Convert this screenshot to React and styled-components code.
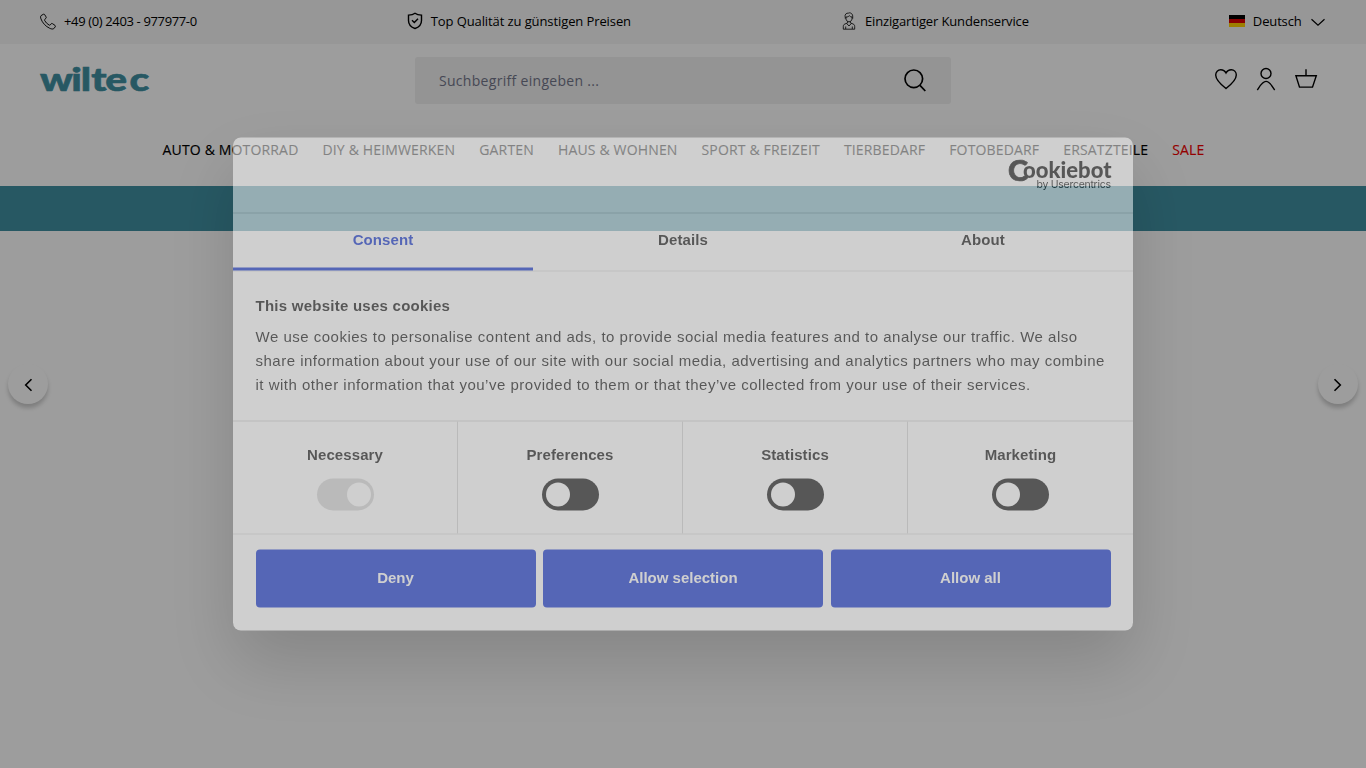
import styled, { createGlobalStyle } from 'styled-components'

const navItems = [
  'AUTO & MOTORRAD',
  'DIY & HEIMWERKEN',
  'GARTEN',
  'HAUS & WOHNEN',
  'SPORT & FREIZEIT',
  'TIERBEDARF',
  'FOTOBEDARF',
  'ERSATZTEILE',
]

const toggles = [
  { name: 'Necessary', locked: true },
  { name: 'Preferences' },
  { name: 'Statistics' },
  { name: 'Marketing' },
]

const PhoneIcon = () => (
  <Svg width='16' height='17' viewBox='0 0 17 17' strokeWidth='1'>
    <path d='M3.6.8 1.2 2.2C.4 2.9.5 4.400 1 5.700c1.600 4.300 5 8 9.300 10 1.500.7 3.200 1.100 4.200.5l1.700-2c.4-.5.3-1.100-.2-1.500l-2.700-1.900c-.5-.4-1.100-.3-1.500.2l-.9 1.100c-.3.4-.8.4-1.200.2C7.600 11.100 6 9.500 4.900 7.400c-.2-.4-.1-.9.200-1.200L6.300 5.100c.4-.4.5-1 .1-1.500L4.900 1.100C4.600.6 4.100.5 3.600.8z' />
  </Svg>
)

const ShieldIcon = () => (
  <Svg width='16' height='18' viewBox='0 0 16 18' strokeWidth='1.4'>
    <path d='M8 1.300C9.800 2.700 12 3.100 14.500 3.100V8.500c0 3.900-2.500 6.700-6.500 8-4-1.300-6.500-4.100-6.500-8V3.100C4 3.100 6.200 2.700 8 1.300z' />
    <path d='M5 8.300 7.300 10.500 11 6.700' />
  </Svg>
)

const AgentIcon = () => (
  <Svg width='16' height='18' viewBox='0 0 16 18' strokeWidth='.8'>
    <path d='M4.200 5.300C3.400 2.500 5.300.9 7.500 1.100c1.200-.8 4.700.1 4.200 4.200M4.300 5.200v1.500M11.700 5.200v1.500M5 5c1.700.1 2.700-.6 3.300-1.300C9 4.500 10 5 11 5v1.600c0 1.800-1.400 3.200-3 3.200S5 8.400 5 6.600zM6.600 9.400v1.500L3.900 12C2.700 12.500 2.300 13.300 2.300 14.400v2.800h11.400v-2.800c0-1.100-.4-1.900-1.600-2.400l-2.700-1.100V9.400M5.600 11.400 8 14l2.400-2.600M4.700 14.500v2.500M11.300 14.500v2.500' />
  </Svg>
)

const ChevronDown = () => (
  <Svg width='16' height='9' viewBox='0 0 16 9' strokeWidth='1.2'>
    <path d='M1.500 2.300 8 8.100 14.500 2.300' />
  </Svg>
)

const SearchIcon = () => (
  <Svg width='24' height='24' viewBox='0 0 24 24' strokeWidth='1.7'>
    <circle cx='10.800' cy='9.800' r='8.800' />
    <path d='M17 16.300 22.300 22' />
  </Svg>
)

const HeartIcon = () => (
  <Svg width='24' height='24' viewBox='0 0 24 24' strokeWidth='1.400'>
    <path d='M12 21.500C7.500 18 1.700 13.500 1.700 8c0-3.200 2.300-5.300 5-5.300 2.300 0 4.300 1.300 5.300 3.300 1-2 3-3.300 5.300-3.300 2.700 0 5 2.100 5 5.300 0 5.500-5.800 10-10.300 13.500z' />
  </Svg>
)

const UserIcon = () => (
  <Svg width='24' height='24' viewBox='0 0 24 24' strokeWidth='1.400'>
    <circle cx='12' cy='6.500' r='5' />
    <path d='M3.300 23C5.800 19.300 8.300 14.400 12 14.400S18.200 19.300 20.700 23' />
  </Svg>
)

const BasketIcon = () => (
  <Svg width='24' height='24' viewBox='0 0 24 24' strokeWidth='1.400'>
    <path d='M1.900 8.700H22.300L18.500 20.100H5.500zM12 2.200V8.700' />
  </Svg>
)

const Arrow = ({ flip }) => (
  <Svg width='10' height='14' viewBox='0 0 10 14' strokeWidth='1.6'>
    <path d={flip ? 'M1.500 1.200 7.300 7 1.500 12.800' : 'M8.500 1.200 2.700 7 8.500 12.800'} />
  </Svg>
)

const App = () => {
  return (
    <>
      <GlobalStyle />
      <Page>
        <TopBar>
          <TopItem $tracking='-0.36px'>
            <PhoneIcon />
            +49 (0) 2403 - 977977-0
          </TopItem>
          <TopItem $tracking='-0.1px'>
            <ShieldIcon />
            Top Qualität zu günstigen Preisen
          </TopItem>
          <TopItem $tracking='-0.14px'>
            <AgentIcon />
            Einzigartiger Kundenservice
          </TopItem>
          <Language $tracking='-0.14px'>
            <Flag />
            Deutsch
            <ChevronDown />
          </Language>
        </TopBar>
        <Header>
          <Logo viewBox='0 0 116 40'>
            <text x='0 24.6 32.1 40.4 51.4 70.4' y='30' transform='scale(1.27 1)'>
              wiltec
            </text>
          </Logo>
          <Search>
            Suchbegriff eingeben ...
            <SearchIcon />
          </Search>
          <Actions>
            <HeartIcon />
            <UserIcon />
            <BasketIcon />
          </Actions>
        </Header>
        <Nav>
          {navItems.map((item) => (
            <NavItem key={item}>{item}</NavItem>
          ))}
          <NavItem $sale>SALE</NavItem>
        </Nav>
        <Banner />
        <Slider>
          <SlideButton>
            <Arrow />
          </SlideButton>
          <SlideButton>
            <Arrow flip />
          </SlideButton>
        </Slider>
      </Page>
      <Underlay />
      <Dialog>
        <DialogHeader>
          <CookieLogo viewBox='0 0 110 50'>
            <BigC x='2' y='31.700' textLength='20' lengthAdjust='spacingAndGlyphs'>
              C
            </BigC>
            <text x='17' y='28' fontSize='23.500' textLength='88.500' lengthAdjust='spacingAndGlyphs'>
              ookiebot
            </text>
            <Byline x='30.500' y='38.500' textLength='74.500'>
              by Usercentrics
            </Byline>
          </CookieLogo>
        </DialogHeader>
        <Tabs>
          <Tab $active>Consent</Tab>
          <Tab>Details</Tab>
          <Tab>About</Tab>
        </Tabs>
        <Body>
          <BodyTitle>This website uses cookies</BodyTitle>
          <BodyText>
            We use cookies to personalise content and ads, to provide social media features and to
            analyse our traffic. We also share information about your use of our site with our
            social media, advertising and analytics partners who may combine it with other
            information that you’ve provided to them or that they’ve collected from your use of
            their services.
          </BodyText>
        </Body>
        <Toggles>
          {toggles.map(({ name, locked }) => (
            <ToggleCell key={name}>
              {name}
              <Switch $locked={locked}>
                <Knob />
              </Switch>
            </ToggleCell>
          ))}
        </Toggles>
        <Buttons>
          <Button>Deny</Button>
          <Button>Allow selection</Button>
          <Button>Allow all</Button>
        </Buttons>
      </Dialog>
    </>
  )
}

const GlobalStyle = createGlobalStyle`
  * {
    box-sizing: border-box;
  }
  body {
    margin: 0;
    overflow: hidden;
    background-color: #fff;
  }
`

const Svg = styled.svg`
  display: block;
  flex: none;
  fill: none;
  stroke: #000;
`

const Page = styled.div`
  height: 100vh;
  display: flex;
  flex-direction: column;
  background-color: #fff;
  color: #000;
  font-family: 'Open Sans', sans-serif;
`

const TopBar = styled.div`
  height: 44px;
  padding: 0 40px 2px;
  display: flex;
  align-items: center;
  gap: 210px;
  background-color: #f5f5f5;
  font-size: 13px;
`

const TopItem = styled.div`
  display: flex;
  align-items: center;
  gap: 8px;
  white-space: nowrap;
  letter-spacing: ${({ $tracking }) => $tracking};
`

const Language = styled(TopItem)`
  margin-left: -10px;
`

const Flag = styled.div`
  width: 16px;
  height: 12px;
  background: linear-gradient(#000 33.3%, #d00 33.3% 66.6%, #ffce00 66.6%);
`

const Header = styled.div`
  height: 73px;
  padding: 0 40px;
  display: grid;
  grid-template-columns: 1fr 536px 1fr;
  align-items: center;
`

const Logo = styled.svg`
  width: 116px;
  height: 40px;
  overflow: visible;
  fill: #4090a2;
  stroke: #4090a2;
  stroke-width: 0.6;
  font-family: Lato, sans-serif;
  font-size: 32px;
  font-weight: 900;
`

const Search = styled.div`
  height: 47px;
  padding: 0 24px;
  display: flex;
  align-items: center;
  justify-content: space-between;
  border-radius: 3px;
  background-color: #f0f0f0;
  color: #73768a;
  font-size: 14px;
  letter-spacing: 0.3px;
`

const Actions = styled.div`
  padding: 0 8px 3px 0;
  display: flex;
  justify-content: flex-end;
  gap: 16px;
`

const Nav = styled.nav`
  height: 69px;
  padding: 23px 0 0 1px;
  display: flex;
  justify-content: center;
  gap: 24px;
  font-size: 14px;
  font-weight: 500;
  line-height: 20px;
  letter-spacing: 0.16px;
  -webkit-text-stroke-width: 0.15px;
`

const NavItem = styled.div`
  color: ${({ $sale }) => ($sale ? '#f00000' : '#000')};
`

const Banner = styled.div`
  height: 45px;
  background-color: #4090a2;
`

const Slider = styled.div`
  flex: 1;
  padding: 133px 8px 0;
  display: flex;
  justify-content: space-between;
`

const SlideButton = styled.div`
  width: 40px;
  height: 40px;
  padding-top: 2px;
  display: flex;
  align-items: center;
  justify-content: center;
  border-radius: 50%;
  background-color: #fff;
  box-shadow: 0 4px 4px rgba(0, 0, 0, 0.2);
`

const Underlay = styled.div`
  position: fixed;
  inset: 0;
  background-color: #000;
  opacity: 0.384;
`

const Dialog = styled.div`
  position: fixed;
  top: 50%;
  left: 50%;
  width: 900px;
  height: 493px;
  transform: translate(-50%, -50%);
  opacity: 0.51;
  overflow: hidden;
  border-radius: 8px;
  background-color: #fff;
  box-shadow: 0 32px 68px rgba(0, 0, 0, 0.3);
  color: #141414;
  font-family: 'Liberation Sans', Arial, sans-serif;
  font-size: 15px;
`

const DialogHeader = styled.div`
  height: 76px;
  padding: 12px 17px 0;
  display: flex;
  justify-content: flex-end;
  border-bottom: 1px solid #d6d6d6;
`

const CookieLogo = styled.svg`
  width: 110px;
  height: 50px;
  overflow: visible;
  fill: #141414;
  font-family: Lato, sans-serif;
  font-weight: 900;
`

const BigC = styled.text`
  font-size: 28.5px;
  stroke: #141414;
  stroke-width: 0.7;
`

const Byline = styled.text`
  font-family: Inter, sans-serif;
  font-size: 10.5px;
  font-weight: 400;
`

const Tabs = styled.div`
  height: 58px;
  display: flex;
  border-bottom: 1px solid #e2e2e2;
`

const Tab = styled.div`
  flex: 1;
  padding-top: 14px;
  line-height: 24px;
  text-align: center;
  font-weight: 700;
  letter-spacing: 0.1px;
  color: ${({ $active }) => ($active ? '#1032cf' : '#141414')};
  border-bottom: ${({ $active }) => ($active ? '3px solid #1032cf' : 'none')};
`

const Body = styled.div`
  height: 150px;
  padding: 21.5px 22.5px 0;
  line-height: 24px;
  border-bottom: 1px solid #d6d6d6;
`

const BodyTitle = styled.h2`
  margin: 0 0 7px;
  font-size: 15px;
  font-weight: 700;
  letter-spacing: 0.25px;
`

const BodyText = styled.p`
  margin: 0;
  letter-spacing: 0.5px;
`

const Toggles = styled.div`
  height: 112.5px;
  display: grid;
  grid-template-columns: repeat(4, 225px);
  border-bottom: 1px solid #e2e2e2;
`

const ToggleCell = styled.div`
  padding-top: 21px;
  display: flex;
  flex-direction: column;
  align-items: center;
  gap: 11.5px;
  line-height: 24px;
  font-weight: 700;
  letter-spacing: 0.1px;
  border-right: 1px solid #d6d6d6;

  &:last-child {
    border-right: none;
  }
`

const Switch = styled.div`
  width: 57px;
  height: 32px;
  padding: 4px 3px 4px 4px;
  display: flex;
  justify-content: ${({ $locked }) => ($locked ? 'flex-end' : 'flex-start')};
  border-radius: 32px;
  background-color: ${({ $locked }) => ($locked ? '#d6d6d6' : '#141414')};
`

const Knob = styled.div`
  width: 24px;
  height: 24px;
  border-radius: 50%;
  background-color: #fff;
`

const Buttons = styled.div`
  padding: 15.5px 22.5px 0;
  display: flex;
  gap: 7.5px;
`

const Button = styled.div`
  flex: 1;
  height: 58px;
  line-height: 56px;
  text-align: center;
  border-radius: 4px;
  background-color: #1032cf;
  color: #fff;
  font-weight: 700;
`

export default App
